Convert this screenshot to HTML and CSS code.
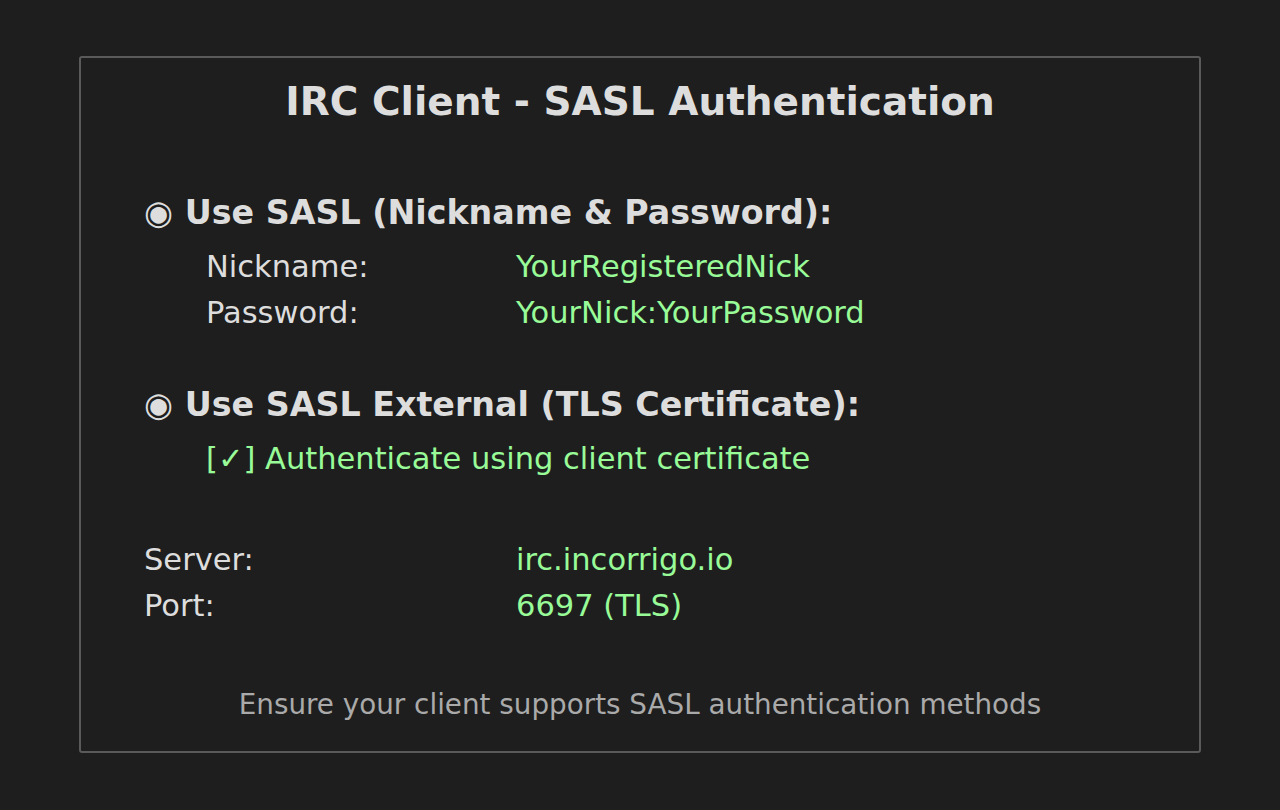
FILE: index.html
```html
<!DOCTYPE html>
<html lang="en">

<head>
  <meta charset="UTF-8">
  <meta name="viewport" content="width=device-width, initial-scale=1.0">
  <title>IRC Client - SASL Authentication</title>
  <link rel="stylesheet" href="styles.css">
</head>

<body>
  <div class="panel">
    <h1 class="title">IRC Client - SASL Authentication</h1>

    <!-- SASL plain -->
    <section class="option">
      <h2>◉ Use SASL (Nickname &amp; Password):</h2>
      <div class="fields indent">
        <span class="label">Nickname:</span>
        <span class="value">YourRegisteredNick</span>
        <span class="label">Password:</span>
        <span class="value">YourNick:YourPassword</span>
      </div>
    </section>

    <!-- SASL external -->
    <section class="option external">
      <h2>◉ Use SASL External (TLS Certificate):</h2>
      <p class="check">[✓] Authenticate using client certificate</p>
    </section>

    <div class="fields server">
      <span class="label">Server:</span>
      <span class="value">irc.incorrigo.io</span>
      <span class="label">Port:</span>
      <span class="value">6697 (TLS)</span>
    </div>

    <p class="note">Ensure your client supports SASL authentication methods</p>
  </div>
</body>

</html>
```

FILE: styles.css
```css
body {
  margin: 0;
  padding: 56px 79px 57px;
  background: #1e1e1e;
  color: #dddddd;
  font-family: "DejaVu Sans", sans-serif;
}

.panel {
  border: 2px solid #5a5a5a;
  border-radius: 3px;
  padding: 21px 63px 0;
  height: 697px;
  box-sizing: border-box;
}

.title {
  margin: 0;
  font-size: 39px;
  line-height: 46px;
  text-align: center;
  color: #dddddd;
}

.option h2 {
  margin: 0;
  font-size: 33.3px;
  line-height: 46px;
  color: #dddddd;
}

.option {
  margin-top: 65px;
}

.option.external {
  margin-top: 46px;
}

.fields {
  display: grid;
  grid-template-columns: 372px auto;
  font-size: 30.5px;
  line-height: 46px;
}

.fields.indent {
  margin: 8px 0 0 62px;
  grid-template-columns: 310px auto;
}

.fields.server {
  margin-top: 55px;
}

.value,
.check {
  color: #98fb98;
}

.check {
  margin: 8px 0 0 62px;
  font-size: 30.5px;
  line-height: 46px;
}

.note {
  margin: 53px 0 0;
  font-size: 27.8px;
  line-height: 46px;
  text-align: center;
  color: #aaaaaa;
}
```
